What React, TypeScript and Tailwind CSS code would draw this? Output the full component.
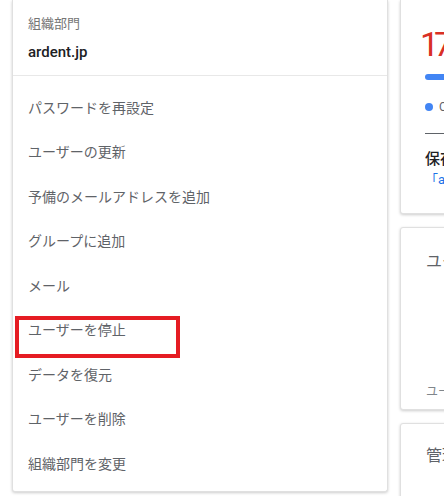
const menuItems = [
  "パスワードを再設定",
  "ユーザーの更新",
  "予備のメールアドレスを追加",
  "グループに追加",
  "メール",
  "ユーザーを停止",
  "データを復元",
  "ユーザーを削除",
  "組織部門を変更",
];

const font = {
  fontFamily: '"Roboto", "Noto Sans CJK JP", sans-serif',
};

const App = () => {
  return (
    <div className="h-[496px] w-[444px] overflow-hidden bg-white" style={font}>
      <div className="flex gap-[12px] pl-[12px]">
        {/* 左カード */}
        <div className="h-[492px] w-[376px] shrink-0 rounded-b-[3px] border border-t-0 border-[#e0e0e0] bg-white shadow-[0_1px_3px_rgba(0,0,0,0.2)]">
          <div className="px-[15px] pt-[14px] pb-[13px]">
            <p className="text-[13px] leading-[20px] text-[#757575]">組織部門</p>
            <p className="mt-[8px] text-[15px] leading-[20px] font-medium text-[#202124]">
              ardent.jp
            </p>
          </div>
          <div className="h-px bg-[#e8e8e8]" />
          <div className="pt-[10px]">
            {menuItems.map((item) => (
              <div key={item} className="relative flex h-[44.5px] items-center px-[15px]">
                <span className="text-[14px] text-[#5f6368]">{item}</span>
                {item === "ユーザーを停止" && (
                  <div className="absolute top-[7px] left-[2px] h-[42px] w-[165px] border-[4px] border-[#e51c23]" />
                )}
              </div>
            ))}
          </div>
        </div>

        {/* 右カラム */}
        <div className="flex w-[200px] shrink-0 flex-col gap-[13px]">
          <div className="h-[214px] rounded-b-[3px] border border-t-0 border-[#e0e0e0] bg-white pl-[24px] shadow-[0_1px_3px_rgba(0,0,0,0.2)]">
            <p className="mt-[24px] ml-[-5px] text-[34px] leading-[40px] tracking-[-5px] text-[#d93025]">17</p>
            <div className="mt-[10px] h-[6px] w-[120px] rounded-full bg-[#4285f4]" />
            <div className="mt-[18px] flex items-center gap-[6px]">
              <span className="size-[8px] rounded-full bg-[#4285f4]" />
              <span className="text-[12px] text-[#5f6368]">OneDrive</span>
            </div>
            <div className="mt-[17px] h-px w-[120px] bg-[#5f6368]" />
            <p className="mt-[15px] text-[15px] leading-[20px] font-medium text-[#202124]">保存容量</p>
            <p className="mt-[1px] text-[13px] leading-[20px] text-[#1a73e8]">「ardent</p>
          </div>
          <div className="h-[183px] rounded-[3px] border border-[#e0e0e0] bg-white pl-[25px] shadow-[0_1px_3px_rgba(0,0,0,0.2)]">
            <p className="mt-[23px] text-[16px] leading-[22px] text-[#5f6368]">ユーザー</p>
            <p className="mt-[111px] text-[12px] leading-[16px] text-[#80868b]">ユーザー</p>
          </div>
          <div className="h-[100px] rounded-[3px] border border-[#e0e0e0] bg-white pl-[25px] shadow-[0_1px_3px_rgba(0,0,0,0.2)]">
            <p className="mt-[21px] text-[16px] leading-[22px] text-[#5f6368]">管理者</p>
          </div>
        </div>
      </div>
    </div>
  );
};

export default App;
